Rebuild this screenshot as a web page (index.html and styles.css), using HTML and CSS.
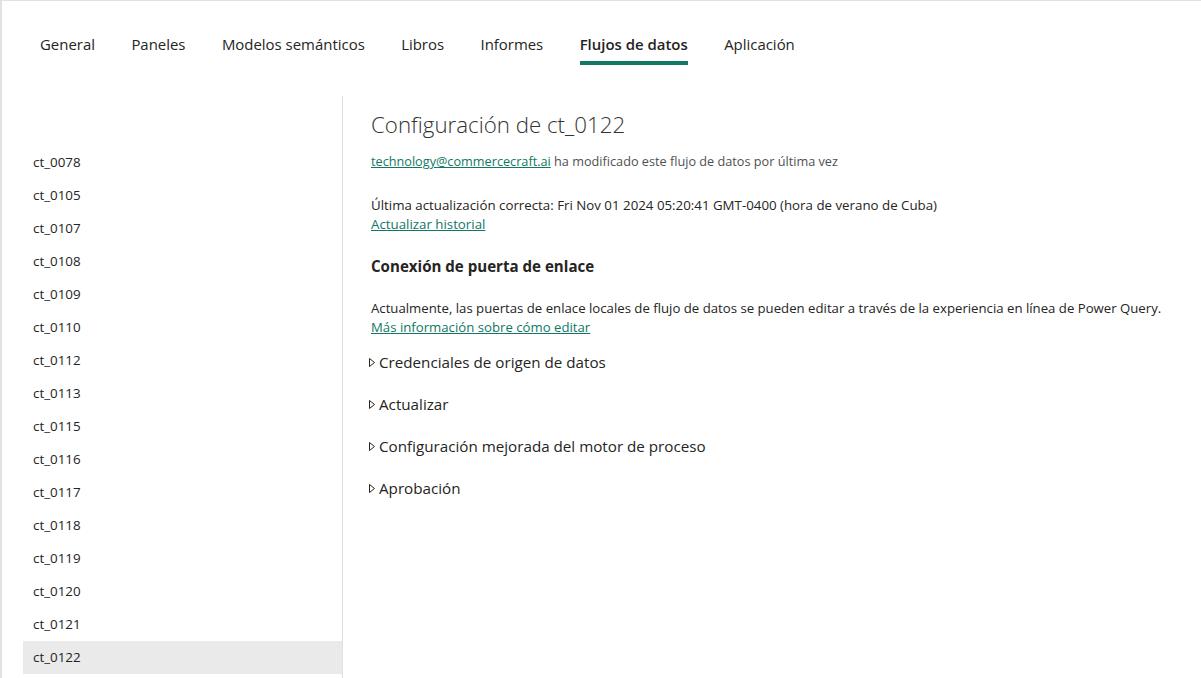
FILE: index.html
```html
<!DOCTYPE html>
<html lang="es">
<head>
<meta charset="utf-8">
<title>Configuración de flujos de datos</title>
<link rel="stylesheet" href="styles.css">
</head>
<body>
<div class="frame">
  <nav class="tabs">
    <span class="tab">General</span>
    <span class="tab">Paneles</span>
    <span class="tab">Modelos semánticos</span>
    <span class="tab">Libros</span>
    <span class="tab">Informes</span>
    <span class="tab active">Flujos de datos</span>
    <span class="tab">Aplicación</span>
  </nav>
  <div class="body">
    <aside class="sidebar">
      <ul class="list">
        <li class="item">ct_0078</li>
        <li class="item">ct_0105</li>
        <li class="item">ct_0107</li>
        <li class="item">ct_0108</li>
        <li class="item">ct_0109</li>
        <li class="item">ct_0110</li>
        <li class="item">ct_0112</li>
        <li class="item">ct_0113</li>
        <li class="item">ct_0115</li>
        <li class="item">ct_0116</li>
        <li class="item">ct_0117</li>
        <li class="item">ct_0118</li>
        <li class="item">ct_0119</li>
        <li class="item">ct_0120</li>
        <li class="item">ct_0121</li>
        <li class="item selected">ct_0122</li>
      </ul>
    </aside>
    <main class="content">
      <h1 class="title">Configuración de ct_0122</h1>
      <p class="modified"><a class="link" href="#">technology@commercecraft.ai</a> ha modificado este flujo de datos por última vez</p>
      <div class="refresh">
        <div>Última actualización correcta: Fri Nov 01 2024 05:20:41 GMT-0400 (hora de verano de Cuba)</div>
        <a class="link" href="#">Actualizar historial</a>
      </div>
      <h2 class="section">Conexión de puerta de enlace</h2>
      <div class="info">
        <div>Actualmente, las puertas de enlace locales de flujo de datos se pueden editar a través de la experiencia en línea de Power Query.</div>
        <a class="link" href="#">Más información sobre cómo editar</a>
      </div>
      <div class="groups">
        <div class="group"><svg class="caret" width="8" height="11" viewBox="0 0 8 11"><path d="M1.5 1.5 L6.5 5.5 L1.5 9.5 Z" fill="none" stroke="#252423" stroke-width="1" stroke-linejoin="round"/></svg>Credenciales de origen de datos</div>
        <div class="group"><svg class="caret" width="8" height="11" viewBox="0 0 8 11"><path d="M1.5 1.5 L6.5 5.5 L1.5 9.5 Z" fill="none" stroke="#252423" stroke-width="1" stroke-linejoin="round"/></svg>Actualizar</div>
        <div class="group"><svg class="caret" width="8" height="11" viewBox="0 0 8 11"><path d="M1.5 1.5 L6.5 5.5 L1.5 9.5 Z" fill="none" stroke="#252423" stroke-width="1" stroke-linejoin="round"/></svg>Configuración mejorada del motor de proceso</div>
        <div class="group"><svg class="caret" width="8" height="11" viewBox="0 0 8 11"><path d="M1.5 1.5 L6.5 5.5 L1.5 9.5 Z" fill="none" stroke="#252423" stroke-width="1" stroke-linejoin="round"/></svg>Aprobación</div>
      </div>
    </main>
  </div>
</div>
</body>
</html>
```
FILE: styles.css
```css
* { box-sizing: border-box; }
html, body { margin: 0; padding: 0; background: #fff; }
body {
  font-family: "Segoe UI", "Open Sans", "Noto Sans", sans-serif;
  color: #252423;
  overflow: hidden;
}
.frame {
  height: 678px;
  border-top: 1px solid #e1e1e1;
  border-left: 2px solid #e1e1e1;
  display: flex;
  flex-direction: column;
}
.tabs {
  display: flex;
  gap: 36.4px;
  padding: 33px 0 0 38px;
  height: 95px;
}
.tab {
  font-size: 14.95px;
  line-height: 20px;
  height: 31px;
  padding-bottom: 7px;
  border-bottom: 4px solid transparent;
}
.tab.active {
  font-weight: 600;
  border-bottom-color: #117865;
}
.body {
  flex: 1;
  display: flex;
  min-height: 0;
}
.sidebar {
  width: 341px;
  border-right: 1px solid #e1e1e1;
  padding: 50px 0 0 21px;
}
.list { list-style: none; margin: 0; padding: 0; }
.item {
  height: 33px;
  line-height: 33px;
  padding-left: 10px;
  font-size: 13.4px;
  color: #252423;
}
.item.selected { background: #eaeaea; }
.content {
  flex: 1;
  padding: 13px 0 0 28px;
  font-size: 13.2px;
}
.title {
  margin: 0;
  font-size: 22.3px;
  font-weight: 300;
  line-height: 32px;
  color: #333;
}
.modified {
  margin: 11px 0 0;
  font-size: 12.7px;
  line-height: 18px;
  color: #505050;
}
.link { color: #117865; text-decoration: underline; }
.refresh {
  margin-top: 26px;
  line-height: 19px;
  font-size: 13.3px;
  color: #252423;
}
.section {
  margin: 22px 0 0;
  font-size: 15.1px;
  font-weight: 700;
  line-height: 20px;
}
.info {
  margin-top: 23px;
  line-height: 19px;
}
.groups {
  margin-top: 4px;
}
.group {
  display: flex;
  align-items: center;
  gap: 3px;
  height: 42px;
  font-size: 15.2px;
  margin-left: -3px;
}
.caret { flex: none; }
```
